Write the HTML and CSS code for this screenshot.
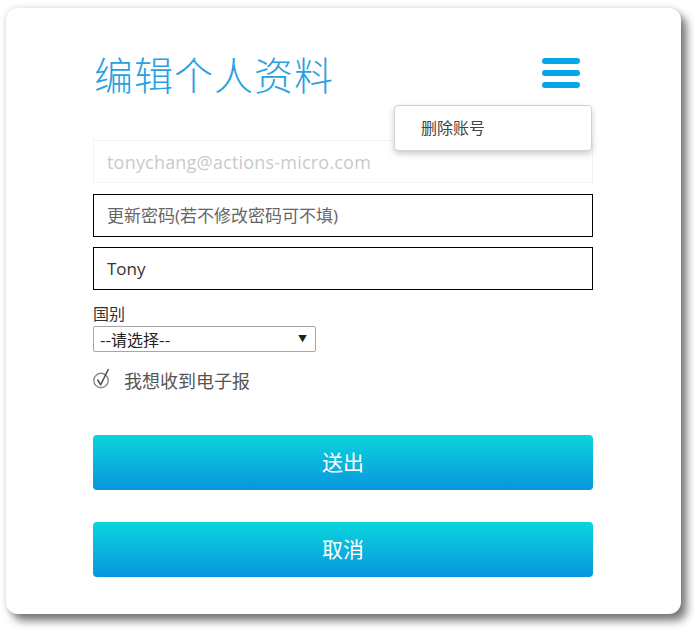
FILE: index.html
```html
<!DOCTYPE html>
<html lang="zh-CN">
<head>
    <meta charset="UTF-8">
    <meta name="viewport" content="width=device-width, initial-scale=1.0">
    <title>编辑个人资料</title>
    <link rel="stylesheet" href="styles.css">
</head>
<body>
    <div class="card">
        <!-- Header -->
        <div class="header">
            <h2>编辑个人资料</h2>
            <button class="menu-btn" type="button" aria-label="menu">
                <span></span><span></span><span></span>
            </button>
            <div class="menu">
                <a>删除账号</a>
            </div>
        </div>

        <!-- Profile Form -->
        <form class="profile-form">
            <input type="email" class="field readonly" value="tonychang@actions-micro.com" readonly>
            <input type="password" class="field" placeholder="更新密码(若不修改密码可不填)">
            <input type="text" class="field name" value="Tony">

            <label class="country-label" for="country">国别</label>
            <div class="select-wrap">
                <select id="country">
                    <option>--请选择--</option>
                </select>
            </div>

            <label class="newsletter">
                <svg width="19" height="22" viewBox="0 0 19 22">
                    <circle cx="8" cy="13.5" r="7.2" fill="none" stroke="#8a8a8a" stroke-width="1.4"/>
                    <path d="M4.5 12.5 L7.6 17.8 L15.5 2" fill="none" stroke="#555" stroke-width="1.6" stroke-linejoin="round"/>
                </svg>
                <span>我想收到电子报</span>
            </label>

            <button type="submit" class="btn">送出</button>
            <button type="button" class="btn">取消</button>
        </form>
    </div>
</body>
</html>
```

FILE: styles.css
```css
* {
    margin: 0;
    padding: 0;
    box-sizing: border-box;
    font-family: 'Open Sans', 'Noto Sans CJK SC', sans-serif;
}

body {
    background: #fff;
    padding: 8px 13px 16px 6px;
}

.card {
    width: 675px;
    height: 606px;
    background: #fff;
    border-radius: 12px;
    box-shadow: 6px 7px 8px rgba(0, 0, 0, 0.5), 0 0 6px rgba(0, 0, 0, 0.15);
    padding: 41px 88px 37px 87px;
}

.header {
    position: relative;
    display: flex;
    justify-content: space-between;
    align-items: center;
    height: 48px;
}

h2 {
    font-family: 'Noto Sans CJK SC', sans-serif;
    font-weight: 300;
    font-size: 39px;
    line-height: 48px;
    color: #2a9fe2;
    letter-spacing: 1px;
    margin-left: 1px;
}

.menu-btn {
    width: 38px;
    display: flex;
    flex-direction: column;
    gap: 6px;
    margin-right: 13px;
    background: none;
    border: none;
    cursor: pointer;
}

.menu-btn span {
    display: block;
    height: 6px;
    border-radius: 3px;
    background: #06a4e8;
}

.menu {
    position: absolute;
    top: 56px;
    right: 1px;
    width: 198px;
    height: 46px;
    background: #fff;
    border: 1px solid #d2d2d2;
    border-radius: 4px;
    box-shadow: 0 3px 6px rgba(0, 0, 0, 0.2);
    display: flex;
    align-items: center;
    padding: 0 0 3px 26px;
    z-index: 2;
}

.menu a {
    font-family: 'Noto Sans CJK SC', sans-serif;
    font-size: 16px;
    color: #444;
    cursor: pointer;
}

.profile-form {
    display: flex;
    flex-direction: column;
    margin-top: 43px;
}

.field {
    height: 43px;
    width: 100%;
    border: 1px solid #000;
    padding: 0 13px;
    font-size: 17px;
    color: #333;
    background: #fff;
    outline: none;
}

.field + .field {
    margin-top: 11px;
}

.field.name {
    margin-top: 10px;
}

.field::placeholder {
    color: #666;
}

.field.readonly {
    border: 1px dotted #e8e8e8;
    color: #cacaca;
    font-size: 18px;
    letter-spacing: 0.2px;
}

.country-label {
    margin-top: 13px;
    font-family: 'Noto Sans CJK SC', sans-serif;
    font-size: 16px;
    line-height: 20px;
    color: #333;
}

.select-wrap {
    position: relative;
    width: 223px;
    margin-top: 3px;
}

.select-wrap::after {
    content: '▼';
    position: absolute;
    right: 9px;
    top: 6px;
    font-size: 9px;
    color: #222;
    pointer-events: none;
}

select {
    appearance: none;
    -webkit-appearance: none;
    width: 100%;
    height: 26px;
    border: 1px solid #a6a6a6;
    border-radius: 2px;
    background: #fff;
    padding: 0 6px;
    font-family: 'Noto Sans CJK SC', sans-serif;
    font-size: 16px;
    color: #222;
}

.newsletter {
    display: flex;
    align-items: center;
    gap: 12px;
    height: 24px;
    margin-top: 16px;
    font-family: 'Noto Sans CJK SC', sans-serif;
    font-size: 18px;
    color: #555;
}

.newsletter svg {
    margin-top: -4px;
}

.btn {
    height: 55px;
    width: 100%;
    border: none;
    border-radius: 4px;
    background: linear-gradient(#0bd5dc, #0896dc);
    color: #fff;
    font-family: 'Noto Sans CJK SC', sans-serif;
    font-size: 21px;
    padding-bottom: 3px;
    cursor: pointer;
    margin-top: 32px;
}

.newsletter + .btn {
    margin-top: 43px;
}
```
